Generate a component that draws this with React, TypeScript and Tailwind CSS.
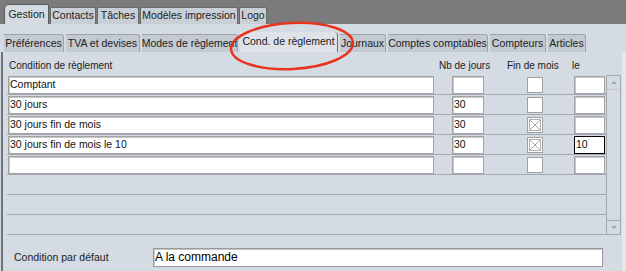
import { FC } from 'react';

const topTabs = [
  { label: 'Gestion', w: 45, active: true },
  { label: 'Contacts', w: 46 },
  { label: 'Tâches', w: 42 },
  { label: 'Modèles impression', w: 98 },
  { label: 'Logo', w: 28 },
];

const subTabs = [
  { label: 'Préférences', w: 60 },
  { label: 'TVA et devises', w: 74 },
  { label: 'Modes de règlement', w: 96 },
  { label: 'Cond. de règlement', w: 98, active: true },
  { label: 'Journaux', w: 46 },
  { label: 'Comptes comptables', w: 100 },
  { label: 'Compteurs', w: 56 },
  { label: 'Articles', w: 38 },
];

const rows = [
  { name: 'Comptant', days: '', eom: false, le: '' },
  { name: '30 jours', days: '30', eom: false, le: '' },
  { name: '30 jours fin de mois', days: '30', eom: true, le: '' },
  { name: '30 jours fin de mois le 10', days: '30', eom: true, le: '10', focus: true },
  { name: '', days: '', eom: false, le: '' },
];

const field = 'bg-white border border-[#a3a3a3] shadow-[inset_1px_1px_0_#c8c8c8] h-[18px] leading-[15px] px-[1px] text-[10.5px] text-[#111]';

const CheckBox: FC<{ checked: boolean }> = ({ checked }) => (
  <div className="w-[16px] h-[16px] bg-white border border-[#a0a0a0] flex items-center justify-center">
    {checked && (
      <svg width="12" height="12" viewBox="0 0 12 12">
        <rect x="0.5" y="0.5" width="11" height="11" fill="none" stroke="#b0b0b0" />
        <path d="M1 1 L11 11 M11 1 L1 11" stroke="#a8a8a8" strokeWidth="1" />
      </svg>
    )}
  </div>
);

const App: FC = () => {
  return (
    <div className="relative w-[626px] h-[271px] overflow-hidden bg-[#d5dbe2] font-['Liberation_Sans',Arial,sans-serif] text-[10.5px] text-[#222] whitespace-nowrap">
      {/* top tabs */}
      <div className="h-[24px] bg-[#7b7b7b] flex items-end pl-[4px]">
        {topTabs.map((t) => (
          <div
            key={t.label}
            style={{ width: t.w }}
            className={
              t.active
                ? 'h-[20px] bg-[#d5dbe2] border border-b-0 border-[#5a5a5a] rounded-tl-[5px] rounded-tr-[2px] flex items-center justify-center mr-[1px] overflow-hidden'
                : 'h-[17px] bg-[#c9cfd6] border border-b-0 border-[#6a6a6a] rounded-t-[2px] flex items-center justify-center mr-[1px] overflow-hidden'
            }
          >
            {t.label}
          </div>
        ))}
      </div>

      {/* sub tabs */}
      <div className="h-[28px] flex items-end pl-[4px]">
        {subTabs.map((t) => (
          <div
            key={t.label}
            style={{ width: t.w }}
            className={
              t.active
                ? 'h-[20px] bg-[#dfe3e9] border-r border-[#707070] rounded-tr-[4px] flex items-center justify-center mr-[2px] overflow-hidden'
                : 'h-[18px] bg-[#c3cad2] border-r border-t border-[#9ca3ab] rounded-tr-[3px] flex items-center justify-center mr-[2px] overflow-hidden'
            }
          >
            {t.label}
          </div>
        ))}
      </div>

      {/* panel */}
      <div className="h-[219px] border-l-2 border-[#6f737a] ml-[1px] flex flex-col">
        <div className="h-[22px] pt-[7px] flex leading-[13px] text-[10px]">
          <div className="w-[436px] pl-[6px]">Condition de règlement</div>
          <div className="w-[68px]">Nb de jours</div>
          <div className="w-[65px]">Fin de mois</div>
          <div>le</div>
        </div>

        <div className="flex ml-[4px] mt-[1px]">
          <div className="w-[599px] flex flex-col">
            {rows.map((r, i) => (
              <div key={i} className="h-[20px] flex items-center border-b border-[#a3a9b0]">
                <div className={`${field} w-[426px] ml-[1px]`}>{r.name}</div>
                <div className={`${field} w-[32px] ml-[18px]`}>{r.days}</div>
                <div className="ml-[43px]">
                  <CheckBox checked={r.eom} />
                </div>
                <div
                  className={
                    r.focus
                      ? 'bg-white border border-black h-[18px] leading-[15px] px-[1px] text-[10.5px] text-[#111] w-[31px] ml-[31px]'
                      : `${field} w-[31px] ml-[31px]`
                  }
                >
                  {r.le}
                </div>
              </div>
            ))}
            {[0, 1, 2].map((i) => (
              <div key={i} className="h-[20px] border-b border-[#a3a9b0]" />
            ))}
          </div>
          <div className="w-[15px] h-[160px] border border-[#a3a9b0] flex flex-col justify-between items-center">
            <div className="h-[14px] w-full flex items-center justify-center border-b border-[#c2c7cd]">
              <div className="w-0 h-0 border-l-[3px] border-r-[3px] border-b-[3px] border-l-transparent border-r-transparent border-b-[#a0a6ad]" />
            </div>
            <div className="h-[14px] w-full flex items-center justify-center border-t border-[#a3a9b0]">
              <div className="w-0 h-0 border-l-[3px] border-r-[3px] border-t-[3px] border-l-transparent border-r-transparent border-t-[#a0a6ad]" />
            </div>
          </div>
        </div>

        <div className="flex items-center mt-[13px]">
          <div className="w-[150px] pl-[11px]">Condition par défaut</div>
          <div className="bg-white border border-[#9a9a9a] shadow-[inset_1px_1px_0_#c8c8c8] w-[450px] h-[19px] leading-[17px] px-[1px] text-[12px] text-black">
            A la commande
          </div>
        </div>
      </div>

      {/* right edge */}
      <div className="absolute top-[52px] right-0 w-[4px] h-[219px] bg-[#e4e8ec]" />

      {/* red annotation */}
      <svg className="absolute left-[226px] top-[18px]" width="132" height="56" viewBox="0 0 132 56">
        <ellipse cx="66" cy="28" rx="61" ry="23" fill="none" stroke="#e8341f" strokeWidth="2.5" transform="rotate(-3 66 28)" />
      </svg>
    </div>
  );
};

export default App;
